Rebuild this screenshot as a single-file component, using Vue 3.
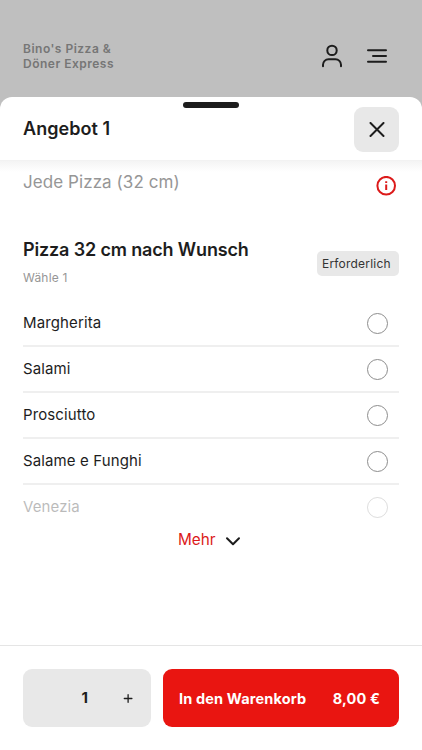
<script setup>
import { ref } from 'vue'

const options = ['Margherita', 'Salami', 'Prosciutto', 'Salame e Funghi', 'Venezia']
const selected = ref(null)
const quantity = ref(1)
</script>

<template>
  <div class="screen">
    <header class="topbar">
      <div class="brand">Bino's Pizza &amp;<br />Döner Express</div>
      <nav class="nav">
        <svg class="user" width="24" height="26" viewBox="0 0 24 26">
          <circle cx="12" cy="7.400" r="4.700" />
          <path d="M3 23.300v-1.500a5.500 5.500 0 0 1 5.500-5.500h7a5.500 5.500 0 0 1 5.500 5.500v1.500" />
        </svg>
        <svg class="menu" width="22" height="16" viewBox="0 0 22 16">
          <path d="M2 2.3h18M7 8h13M2 13.7h18" />
        </svg>
      </nav>
    </header>

    <section class="sheet">
      <div class="handle"></div>
      <div class="sheet-head">
        <h1>Angebot 1</h1>
        <button class="close" aria-label="Schließen">
          <svg width="16" height="16" viewBox="0 0 16 16"><path d="M1.500 1l13 13M14.500 1l-13 13" /></svg>
        </button>
      </div>

      <main class="content">
        <div class="intro">
          <p>Jede Pizza (32 cm)</p>
          <svg class="info" width="20" height="20" viewBox="0 0 20 20">
            <circle cx="10.200" cy="9.700" r="8.800" />
            <path d="M10.200 8.400v5.600M10.200 5.200v1.900" />
          </svg>
        </div>

        <div class="group">
          <div>
            <h2>Pizza 32 cm nach Wunsch</h2>
            <p class="hint">Wähle 1</p>
          </div>
          <span class="tag">Erforderlich</span>
        </div>

        <ul class="options">
          <li v-for="name in options" :key="name" @click="selected = name">
            <span class="name">{{ name }}</span>
            <span class="radio"></span>
          </li>
        </ul>

        <div class="more">
          <span>Mehr</span>
          <svg width="16" height="10" viewBox="0 0 16 10"><path d="M2 2.200l6 6 6-6" /></svg>
        </div>
      </main>

      <footer class="footer">
        <div class="stepper">
          <span class="count">{{ quantity }}</span>
          <button class="plus" aria-label="Mehr" @click="quantity++">
            <svg width="10" height="10" viewBox="0 0 10 10"><path d="M1.300 5.500h7.600M5.100 1.700v7.600" /></svg>
          </button>
        </div>
        <button class="cart">
          <span class="cart-label">In den Warenkorb</span>
          <span class="price">8,00 €</span>
        </button>
      </footer>
    </section>
  </div>
</template>

<style>
body {
  background: #bfbfbf;
}
</style>

<style scoped>
.screen {
  height: 750px;
  display: flex;
  flex-direction: column;
  overflow: hidden;
  background: #bfbfbf;
  color: #1d1d1d;
  font-family: Inter, "Liberation Sans", sans-serif;
}
h1, h2, p, ul {
  margin: 0;
  padding: 0;
}
button {
  border: 0;
  padding: 0;
  background: none;
  font: inherit;
  color: inherit;
}
svg {
  display: block;
  fill: none;
  stroke: #1d1d1d;
  stroke-width: 2;
  stroke-linecap: round;
  stroke-linejoin: round;
}
.topbar {
  height: 97px;
  flex: none;
  box-sizing: border-box;
  padding: 41px 34px 0 23px;
  display: flex;
  justify-content: space-between;
  align-items: flex-start;
}
.brand {
  font-size: 12px;
  line-height: 15px;
  font-weight: 600;
  letter-spacing: 0.5px;
  color: #767676;
}
.nav {
  display: flex;
  align-items: center;
  gap: 22px;
  padding-top: 2px;
}
.sheet {
  flex: 1;
  display: flex;
  flex-direction: column;
  background: #fff;
  border-radius: 12px 12px 0 0;
}
.handle {
  width: 56px;
  height: 6px;
  margin: 5px auto 0;
  border-radius: 3px;
  background: #1d1d1d;
}
.sheet-head {
  height: 53px;
  flex: none;
  display: flex;
  justify-content: space-between;
  align-items: flex-start;
  padding: 0 23px;
  margin-top: -1px;
}
h1 {
  font-size: 18px;
  line-height: 22px;
  margin-top: 11px;
  font-weight: 600;
  letter-spacing: 0.05px;
}
.close {
  width: 45px;
  height: 45px;
  border-radius: 9px;
  background: #e8e8e8;
  display: grid;
  place-items: center;
}
.content {
  flex: 1;
  padding: 0 23px;
  border-top: 1px solid #f2f2f2;
  background: linear-gradient(#f4f4f4, #fff 11px);
}
.intro {
  display: flex;
  justify-content: space-between;
  padding: 10px 3px 0 0;
  height: 68px;
}
.intro p {
  font-size: 17px;
  line-height: 22px;
  letter-spacing: 0.07px;
  color: #969696;
}
.info {
  margin-top: 5px;
  stroke: #dc1a1a;
  stroke-linecap: butt;
}
.group {
  display: flex;
  justify-content: space-between;
  height: 62px;
}
h2 {
  font-size: 18px;
  line-height: 22px;
  font-weight: 600;
  letter-spacing: -0.15px;
}
.hint {
  margin-top: 9px;
  font-size: 12px;
  line-height: 16px;
  letter-spacing: 0.2px;
  color: #969696;
}
.tag {
  box-sizing: border-box;
  width: 82px;
  height: 25px;
  margin-top: 12px;
  padding-left: 5px;
  border-radius: 5px;
  background: #e8e8e8;
  font-size: 12px;
  line-height: 25px;
  letter-spacing: 0.2px;
  color: #333;
}
.options {
  list-style: none;
}
.options li {
  box-sizing: border-box;
  height: 46px;
  border-bottom: 2px solid #efefef;
  display: flex;
  justify-content: space-between;
  align-items: center;
  padding-right: 11px;
}
.name {
  font-size: 15px;
  line-height: 20px;
  letter-spacing: 0.12px;
}
.radio {
  box-sizing: border-box;
  width: 21px;
  height: 21px;
  border: 1px solid #8d8d8d;
  border-radius: 50%;
}
.options li:last-child {
  border-color: transparent;
}
.options li:last-child > * {
  opacity: 0.3;
}
.more {
  display: flex;
  align-items: center;
  gap: 9px;
  margin-top: -2px;
  padding-left: 155px;
  font-size: 15.3px;
  line-height: 22px;
  color: #dc1a1a;
}
.more svg {
  margin-top: 2px;
}
.footer {
  height: 105px;
  flex: none;
  box-sizing: border-box;
  border-top: 1px solid #e5e5e5;
  padding: 23px 23px 0;
  display: flex;
  gap: 12px;
}
.stepper {
  box-sizing: border-box;
  width: 128px;
  height: 58px;
  padding-right: 18px;
  border-radius: 9px;
  background: #e8e8e8;
  display: flex;
  justify-content: flex-end;
  align-items: center;
  gap: 35px;
}
.count {
  font-size: 15px;
  line-height: 20px;
  font-weight: 700;
}
.plus svg {
  stroke-width: 1.3;
}
.cart {
  flex: 1;
  height: 58px;
  padding: 0 19px 0 16px;
  border-radius: 9px;
  background: #e91511;
  color: #fff;
  font-size: 14.5px;
  font-weight: 700;
  letter-spacing: 0.15px;
  display: flex;
  justify-content: space-between;
  align-items: center;
}
</style>
